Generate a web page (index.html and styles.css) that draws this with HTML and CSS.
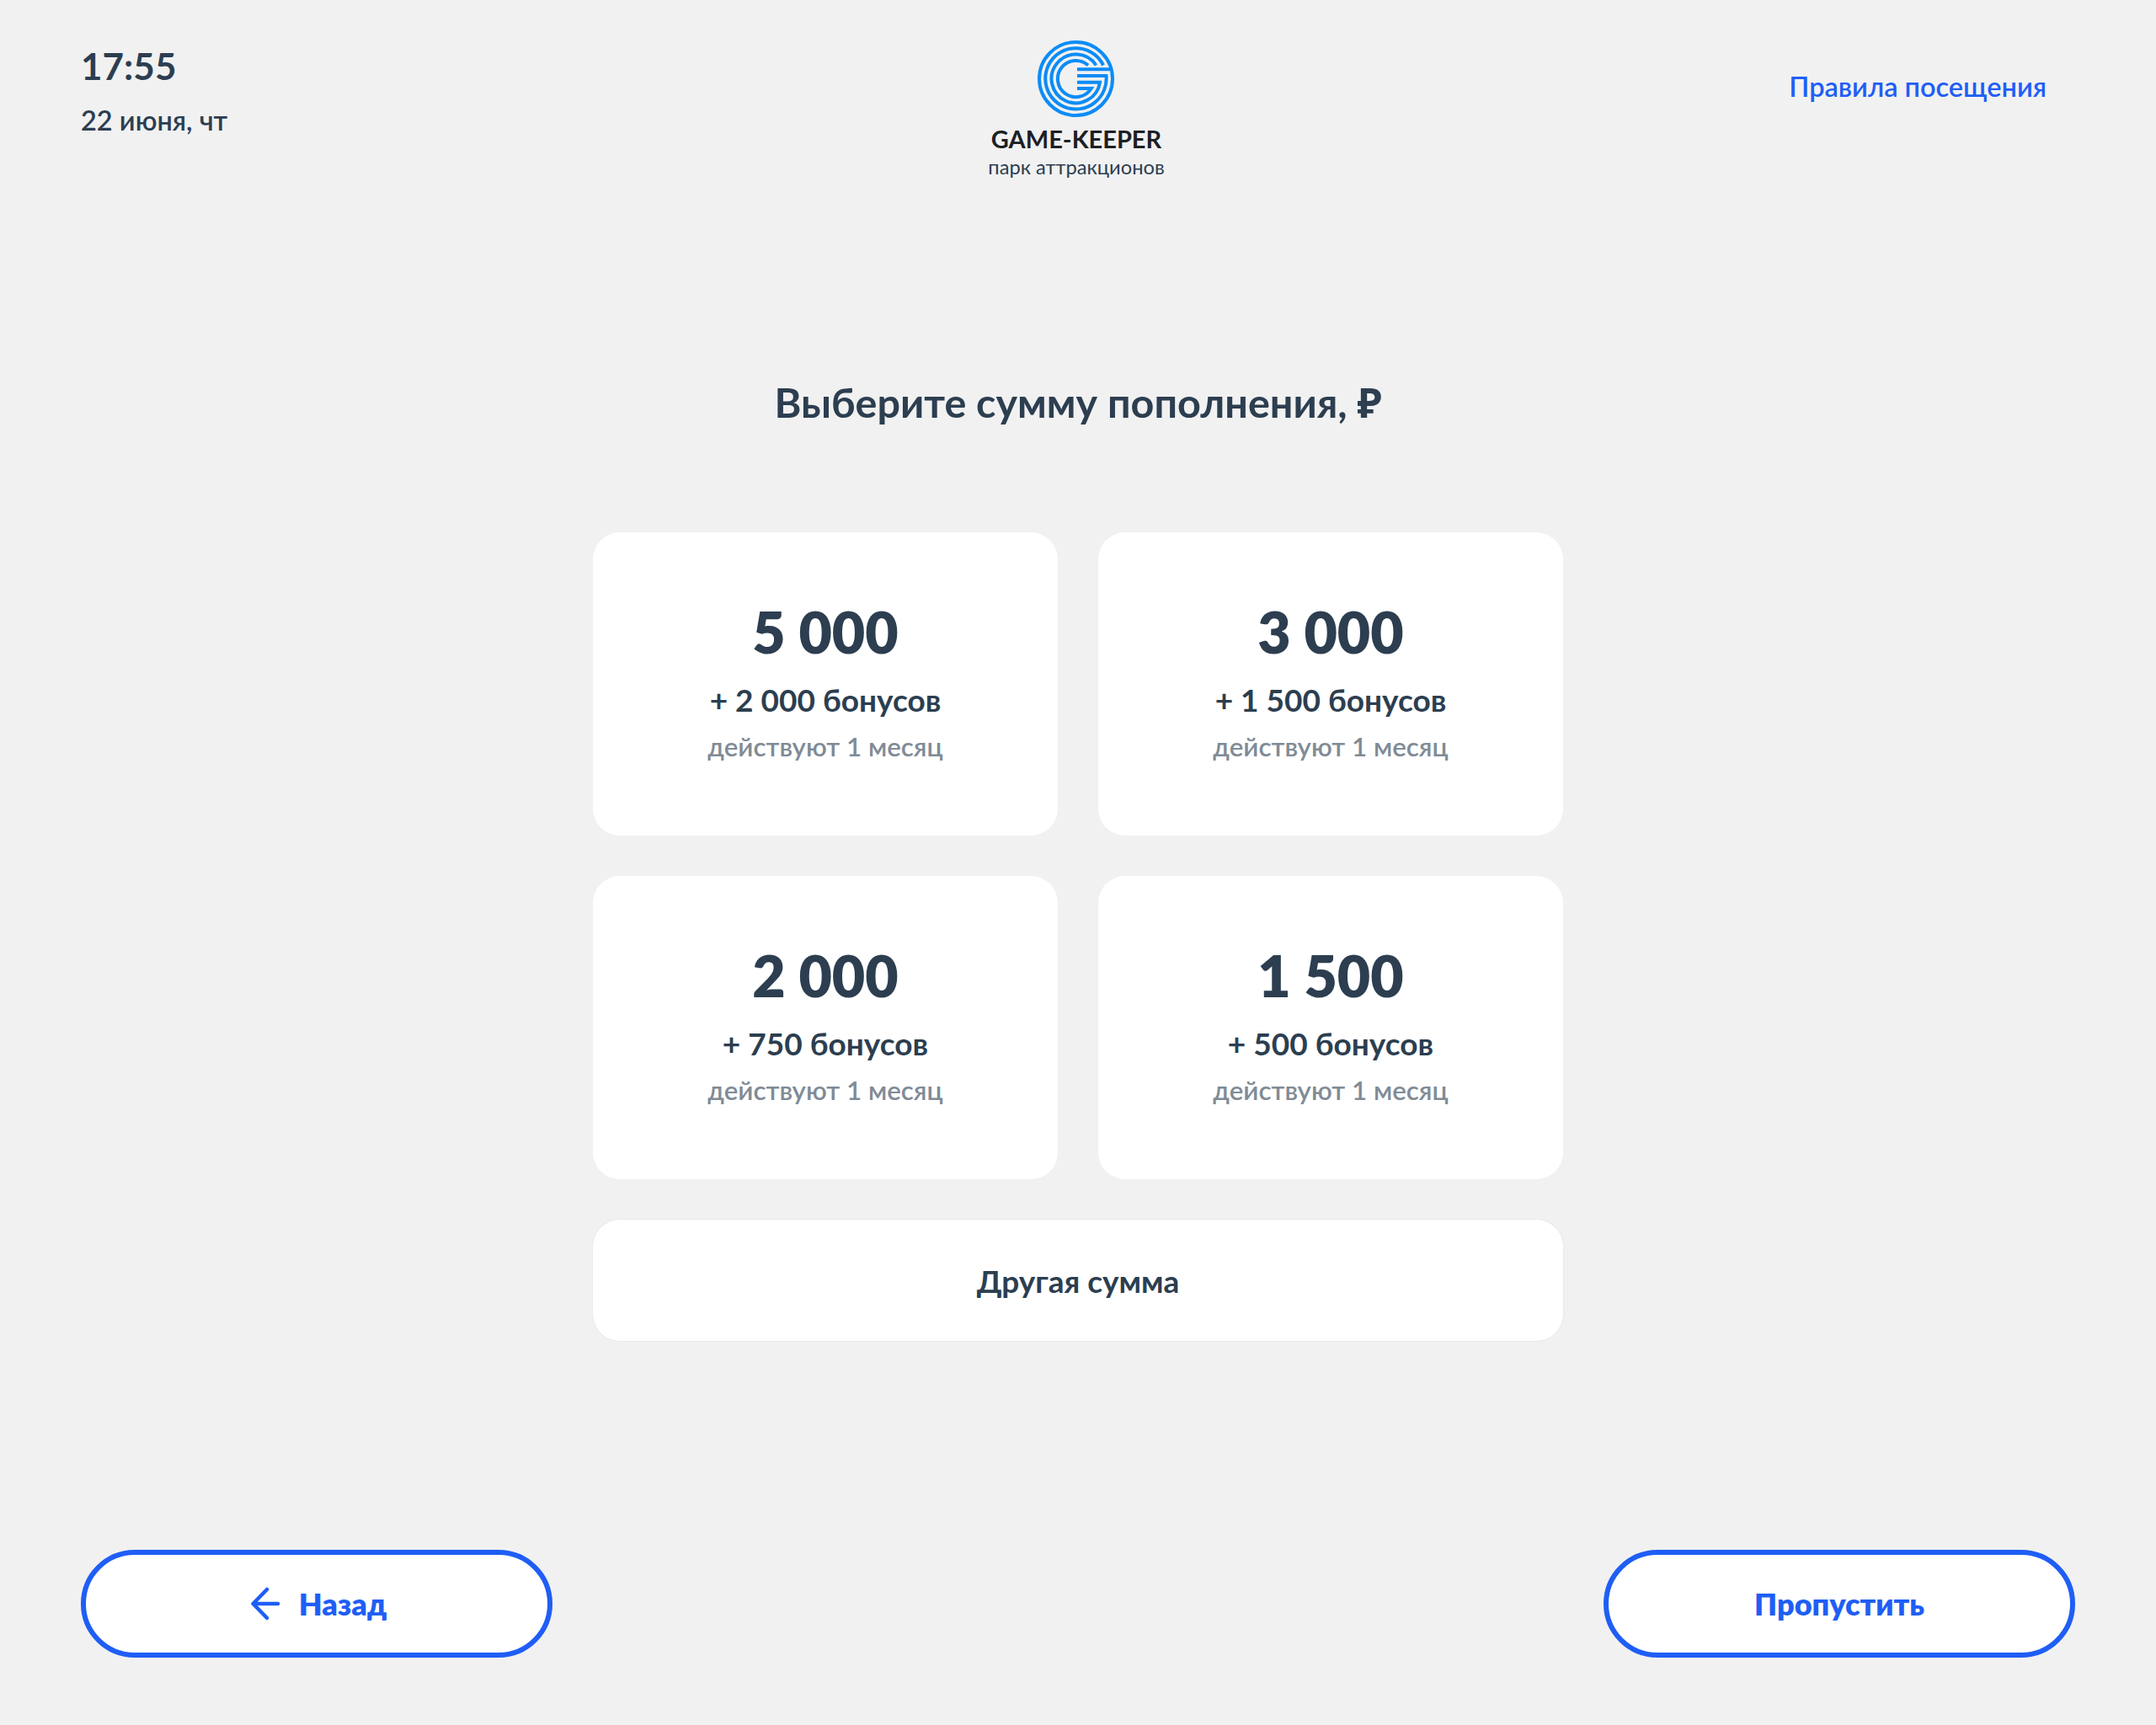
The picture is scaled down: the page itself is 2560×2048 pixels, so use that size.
FILE: index.html
```html
<!DOCTYPE html>
<html lang="ru">

<head>
    <meta charset="UTF-8" />
    <title>GAME-KEEPER</title>
    <link rel="stylesheet" href="styles.css">
</head>

<body>
    <header class="topbar">
        <div class="clock">
            <div class="clock-time">17:55</div>
            <div class="clock-date">22 июня, чт</div>
        </div>
        <div class="brand">
            <svg class="brand-logo" viewBox="0 0 91 91" width="91" height="91">
                <circle cx="45.5" cy="45.5" r="43.5" />
                <path d="M47 34.3H87.5" />
                <path d="M47 42H81.5A36.2 36.2 0 1 1 78 29.5" />
                <path d="M47 49.7H74A28.9 28.9 0 1 1 69.5 29.5" />
                <path d="M47 57H63.8A21.6 21.6 0 1 1 60 29.5" />
            </svg>
            <div class="brand-name">GAME-KEEPER</div>
            <div class="brand-sub">парк аттракционов</div>
        </div>
        <a class="rules-link" href="#">Правила посещения</a>
    </header>

    <main class="content">
        <h1 class="title">Выберите сумму пополнения, ₽</h1>
        <div class="amounts">
            <button class="amount-card">
                <span class="amount-value">5 000</span>
                <span class="amount-bonus">+ 2 000 бонусов</span>
                <span class="amount-note">действуют 1 месяц</span>
            </button>
            <button class="amount-card">
                <span class="amount-value">3 000</span>
                <span class="amount-bonus">+ 1 500 бонусов</span>
                <span class="amount-note">действуют 1 месяц</span>
            </button>
            <button class="amount-card">
                <span class="amount-value">2 000</span>
                <span class="amount-bonus">+ 750 бонусов</span>
                <span class="amount-note">действуют 1 месяц</span>
            </button>
            <button class="amount-card">
                <span class="amount-value">1 500</span>
                <span class="amount-bonus">+ 500 бонусов</span>
                <span class="amount-note">действуют 1 месяц</span>
            </button>
            <button class="amount-other">Другая сумма</button>
        </div>
    </main>

    <footer class="bottombar">
        <button class="nav-btn">
            <svg class="nav-icon" viewBox="0 0 36 40" width="36" height="40">
                <path d="M33 20H4M20 3L3.500 20L20 37" />
            </svg>
            Назад
        </button>
        <button class="nav-btn">Пропустить</button>
    </footer>
</body>

</html>
```

FILE: styles.css
```css
:root {
    --bg: #f1f1f1;
    --text-color: #2c3e50;
    --muted: #808b96;
    --accent: #1f5ef5;
    --logo-blue: #0c8cf7;
}

* {
    box-sizing: border-box;
}

body {
    margin: 0;
    height: 2048px;
    display: flex;
    flex-direction: column;
    background: var(--bg);
    color: var(--text-color);
    font-family: 'Lato', 'Noto Sans', sans-serif;
}

button {
    font-family: inherit;
    color: inherit;
    cursor: pointer;
}

.topbar {
    display: grid;
    grid-template-columns: 1fr auto 1fr;
    padding: 48px 100px 0 96px;
    height: 220px;
}

.clock-time {
    font-size: 44px;
    font-weight: 700;
    line-height: 60px;
}

.clock-date {
    margin-top: 15px;
    font-size: 32.500px;
    font-weight: 600;
    line-height: 40px;
}

.brand {
    display: flex;
    flex-direction: column;
    align-items: center;
}

.brand-logo {
    fill: none;
    stroke: var(--logo-blue);
    stroke-width: 4;
}

.brand-name {
    margin-top: 8px;
    font-size: 29px;
    font-weight: 700;
    line-height: 36px;
    color: #1c2024;
}

.brand-sub {
    font-size: 23.700px;
    line-height: 30px;
}

.rules-link {
    justify-self: end;
    margin: 35px 30px 0 0;
    font-size: 32.500px;
    font-weight: 600;
    line-height: 40px;
    color: var(--accent);
    text-decoration: none;
}

.content {
    flex: 1;
    display: flex;
    flex-direction: column;
    align-items: center;
}

.title {
    margin: 228px 0 126px;
    font-size: 48.500px;
    font-weight: 700;
    line-height: 58px;
}

.amounts {
    display: grid;
    grid-template-columns: 552px 552px;
    gap: 48px;
}

.amount-card {
    height: 360px;
    display: flex;
    flex-direction: column;
    align-items: center;
    padding: 80px 0 0;
    background: #fff;
    border: none;
    border-radius: 32px;
}

.amount-value {
    font-size: 68px;
    font-weight: 800;
    line-height: 76px;
}

.amount-bonus {
    margin-top: 20px;
    font-size: 37px;
    font-weight: 700;
    line-height: 46px;
}

.amount-note {
    margin-top: 10px;
    font-size: 31.300px;
    font-weight: 600;
    line-height: 44px;
    color: var(--muted);
}

.amount-other {
    grid-column: 1 / 3;
    height: 144px;
    background: #fff;
    border: none;
    box-shadow: 0 0 0 1px #e9e9e9;
    border-radius: 32px;
    font-size: 37px;
    font-weight: 700;
}

.bottombar {
    display: flex;
    justify-content: space-between;
    padding: 0 96px 80px;
}

.nav-btn {
    width: 560px;
    height: 128px;
    display: flex;
    align-items: center;
    justify-content: center;
    gap: 22px;
    background: #fff;
    border: 6px solid var(--accent);
    border-radius: 64px;
    font-size: 36px;
    font-weight: 800;
    color: var(--accent);
}

.nav-icon {
    margin-left: 4px;
    fill: none;
    stroke: var(--accent);
    stroke-width: 4.500;
    stroke-linecap: round;
    stroke-linejoin: round;
}
```
